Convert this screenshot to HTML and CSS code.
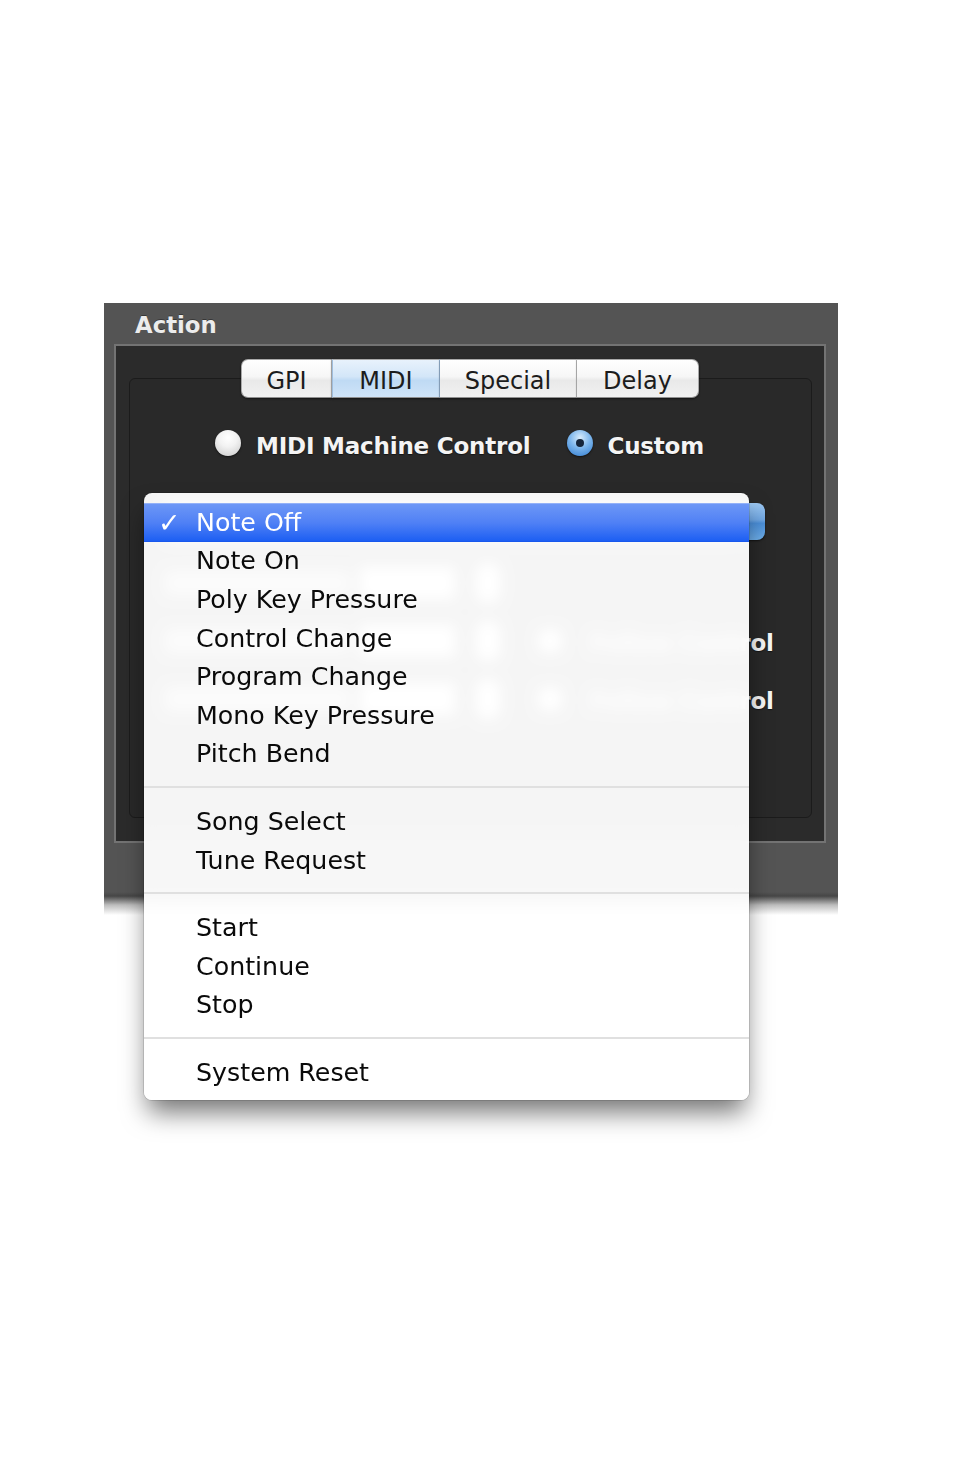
FILE: index.html
```html
<!DOCTYPE html>
<html>
<head>
<meta charset="utf-8">
<title>Action</title>
<link rel="stylesheet" href="styles.css">
</head>
<body>
<div class="panel">
  <div class="title">Action</div>
  <div class="outer-box">
    <div class="tabs">
      <span class="tab tab-gpi">GPI</span>
      <span class="tab tab-midi sel">MIDI</span>
      <span class="tab tab-special">Special</span>
      <span class="tab tab-delay">Delay</span>
    </div>
    <div class="tab-box">
      <div class="radios">
        <span class="radio"><span class="dot"></span><span class="radio-label">MIDI Machine Control</span></span>
        <span class="radio radio-second"><span class="dot on"></span><span class="radio-label">Custom</span></span>
      </div>
      <div class="popup"><span class="popup-body"></span><span class="popup-cap"></span></div>
      <div class="rows">
        <div class="field-row">
          <span class="row-label"></span>
          <span class="field"></span>
          <span class="stepper"></span>
          <span></span>
          <span></span>
        </div>
        <div class="field-row">
          <span class="row-label"></span>
          <span class="field"></span>
          <span class="stepper"></span>
          <span class="checkbox"></span>
          <span class="follow">Follow Control</span>
        </div>
        <div class="field-row">
          <span class="row-label"></span>
          <span class="field"></span>
          <span class="stepper"></span>
          <span class="checkbox"></span>
          <span class="follow">Follow Control</span>
        </div>
      </div>
    </div>
  </div>

  <div class="menu">
    <div class="item selected"><span class="check">✓</span>Note Off</div>
    <div class="item"><span class="check"></span>Note On</div>
    <div class="item"><span class="check"></span>Poly Key Pressure</div>
    <div class="item"><span class="check"></span>Control Change</div>
    <div class="item"><span class="check"></span>Program Change</div>
    <div class="item"><span class="check"></span>Mono Key Pressure</div>
    <div class="item"><span class="check"></span>Pitch Bend</div>
    <div class="sep"></div>
    <div class="item"><span class="check"></span>Song Select</div>
    <div class="item"><span class="check"></span>Tune Request</div>
    <div class="sep"></div>
    <div class="item"><span class="check"></span>Start</div>
    <div class="item"><span class="check"></span>Continue</div>
    <div class="item"><span class="check"></span>Stop</div>
    <div class="sep"></div>
    <div class="item"><span class="check"></span>System Reset</div>
  </div>
</div>
</body>
</html>
```

FILE: styles.css
```css
html, body {
  margin: 0;
  padding: 0;
  background: #ffffff;
}

body {
  font-family: "DejaVu Sans", "Liberation Sans", sans-serif;
  padding-top: 303px;
  height: 1171px;
}

.panel {
  position: relative;
  margin-left: 104px;
  width: 734px;
  height: 612px;
  box-sizing: border-box;
  background: linear-gradient(to bottom,
    #545454 0,
    #545454 589px,
    #464646 593px,
    #bdbdbd 602px,
    #ffffff 612px);
}

.title {
  height: 39px;
  padding-top: 2px;
  line-height: 41px;
  padding-left: 31px;
  font-weight: bold;
  font-size: 22.8px;
  color: #ececec;
  text-shadow: 0 -1px 0 rgba(0,0,0,0.35);
}

.outer-box {
  margin-left: 10px;
  width: 712px;
  height: 499px;
  box-sizing: border-box;
  border: 2px solid #737373;
  background: #2b2b2b;
  padding: 13px 12px 0 13px;
}

.tabs {
  position: relative;
  z-index: 1;
  display: flex;
  justify-content: center;
  height: 39px;
  padding-right: 1px;
}

.tab {
  display: flex;
  align-items: center;
  justify-content: center;
  box-sizing: border-box;
  height: 39px;
  padding-top: 4px;
  font-size: 24px;
  color: #1c1c1c;
  background: linear-gradient(to bottom, #ffffff 0%, #f6f6f6 45%, #e9e9e9 55%, #f1f1f1 100%);
  border-top: 1px solid #a9a9a9;
  border-bottom: 1px solid #8f8f8f;
  border-right: 1px solid #c2c2c2;
  box-shadow: 0 1px 2px rgba(0,0,0,0.55);
}

.tab-gpi { width: 91px; border-radius: 7px 0 0 7px; border-left: 1px solid #a9a9a9; }
.tab-midi { width: 108px; }
.tab-special { width: 137px; }
.tab-delay { width: 122px; border-radius: 0 7px 7px 0; border-right: 1px solid #a9a9a9; }

.tab.sel {
  background: linear-gradient(to bottom, #e8f2fc 0%, #d3e6f8 45%, #bfdaf4 55%, #cfe4f8 100%);
  border-left: 1px solid #9fbede;
  border-right: 1px solid #9fbede;
}

.tab-box {
  margin-top: -20px;
  height: 440px;
  box-sizing: border-box;
  border: 1px solid #1b1b1b;
  border-radius: 6px;
  background: #292929;
  padding-top: 49px;
}

.radios {
  display: flex;
  align-items: center;
  height: 30px;
  padding-left: 85px;
}

.radio {
  display: flex;
  align-items: center;
}

.radio-second {
  margin-left: 37px;
}

.dot {
  width: 26px;
  height: 26px;
  border-radius: 50%;
  box-sizing: border-box;
  background: radial-gradient(circle at 50% 30%, #ffffff 0%, #f2f2f2 40%, #c9c9c9 100%);
  box-shadow: 0 1px 2px rgba(0,0,0,0.6);
  margin-right: 15px;
  display: flex;
  align-items: center;
  justify-content: center;
}

.dot.on {
  background: radial-gradient(circle at 50% 30%, #d8ecfc 0%, #7db6ec 45%, #2f7bd0 100%);
  margin-right: 14px;
}

.dot.on::before {
  content: "";
  width: 8px;
  height: 8px;
  border-radius: 50%;
  background: #15253a;
}

.radio-label {
  padding-top: 5px;
  font-weight: bold;
  font-size: 23px;
  letter-spacing: -0.2px;
  color: #f4f4f4;
  text-shadow: 0 1px 1px rgba(0,0,0,0.5);
}

.popup {
  display: flex;
  margin: 45px 46px 0 35px;
  height: 37px;
}

.popup-body {
  flex: 1;
  background: linear-gradient(to bottom, #ffffff, #e6e6e6);
  border-radius: 7px 0 0 7px;
}

.popup-cap {
  width: 34px;
  border-radius: 0 8px 8px 0;
  background: linear-gradient(to bottom, #9cc7f1 0%, #71a8e4 45%, #4b8fd9 55%, #6fb0ec 100%);
  box-shadow: 0 1px 2px rgba(0,0,0,0.6);
}

.rows {
  display: flex;
  flex-direction: column;
  gap: 18px;
  margin-top: 23px;
}

.field-row {
  display: grid;
  grid-template-columns: 185px 95px 45px 60px 1fr;
  column-gap: 10px;
  align-items: center;
  height: 40px;
  padding: 0 39px 0 35px;
}

.row-label {
  height: 24px;
  background: #ffffff;
  opacity: 0.6;
  border-radius: 3px;
}

.field {
  height: 32px;
  background: #ffffff;
  border-radius: 2px;
}

.stepper {
  justify-self: center;
  width: 24px;
  height: 40px;
  border-radius: 11px;
  background: #ffffff;
}

.checkbox {
  justify-self: center;
  width: 22px;
  height: 22px;
  border-radius: 4px;
  background: #ffffff;
}

.follow {
  text-align: right;
  padding-top: 4px;
  font-weight: bold;
  font-size: 23px;
  letter-spacing: -0.2px;
  color: #f6f6f6;
  text-shadow: 0 1px 1px rgba(0,0,0,0.5);
  white-space: nowrap;
}

/* Popup menu overlay */
.menu {
  position: absolute;
  left: 40px;
  top: 190px;
  width: 605px;
  box-sizing: border-box;
  padding: 10px 0 8.4px;
  background: rgba(255,255,255,0.955);
  -webkit-backdrop-filter: blur(7px);
  backdrop-filter: blur(7px);
  border-radius: 8px;
  box-shadow: 0 0 0 1px rgba(0,0,0,0.12), 0 16px 26px -4px rgba(0,0,0,0.55);
  z-index: 5;
}

.item {
  display: flex;
  align-items: center;
  height: 38.6px;
  box-sizing: border-box;
  padding-left: 14px;
  font-size: 25.3px;
  color: #0a0a0a;
  white-space: nowrap;
}

.check {
  display: inline-block;
  width: 38px;
  font-size: 27px;
  font-weight: bold;
  line-height: 1;
}

.item.selected {
  color: #ffffff;
  background: linear-gradient(to bottom, #6d97f6 0%, #4f80f5 50%, #1d5ff3 97%, #1553e8 100%);
  border-top: 1px solid #93b1f8;
  background-clip: padding-box;
}

.sep {
  height: 2px;
  margin: 13px 0 14px;
  background: #e0e0e0;
}
```
